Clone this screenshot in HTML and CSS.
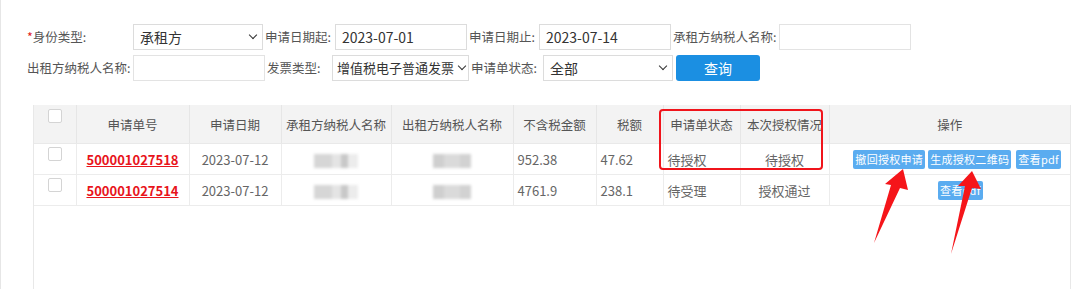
FILE: index.html
```html
<!DOCTYPE html>
<html lang="zh-CN">
	<head>
		<meta charset="UTF-8" />
		<title>授权申请查询</title>
		<link rel="stylesheet" href="styles.css">
	</head>
	<body>
		<div class="page">
			<form class="search">
				<div class="search-row">
					<label class="lbl w-first"><span class="req">*</span>身份类型:</label>
					<div class="field sel w-130"><span>承租方</span><i class="caret"></i></div>
					<label class="lbl w-72">申请日期起:</label>
					<div class="field w-132">2023-07-01</div>
					<label class="lbl w-72">申请日期止:</label>
					<div class="field w-132">2023-07-14</div>
					<label class="lbl w-107">承租方纳税人名称:</label>
					<div class="field w-132 light"></div>
				</div>
				<div class="search-row">
					<label class="lbl w-first">出租方纳税人名称:</label>
					<div class="field w-132 light"></div>
					<label class="lbl w-67">发票类型:</label>
					<div class="field sel w-137 small"><span>增值税电子普通发票</span><i class="caret"></i></div>
					<label class="lbl w-73">申请单状态:</label>
					<div class="field sel w-130"><span>全部</span><i class="caret"></i></div>
					<button type="button" class="btn-search">查询</button>
				</div>
			</form>

			<div class="grid-box">
				<table class="list">
					<colgroup>
						<col style="width: 42px">
						<col style="width: 113px">
						<col style="width: 92px">
						<col style="width: 110px">
						<col style="width: 122px">
						<col style="width: 83px">
						<col style="width: 67px">
						<col style="width: 77px">
						<col style="width: 89px">
						<col>
					</colgroup>
					<thead>
						<tr>
							<th class="c-chk"><span class="chk"></span></th>
							<th>申请单号</th>
							<th>申请日期</th>
							<th>承租方纳税人名称</th>
							<th>出租方纳税人名称</th>
							<th>不含税金额</th>
							<th>税额</th>
							<th>申请单状态</th>
							<th>本次授权情况</th>
							<th>操作</th>
						</tr>
					</thead>
					<tbody>
						<tr>
							<td class="c-chk"><span class="chk"></span></td>
							<td class="center"><a class="order-no" href="#">500001027518</a></td>
							<td class="center">2023-07-12</td>
							<td class="center"><span class="mask m-a"></span></td>
							<td class="center"><span class="mask m-b"></span></td>
							<td>952.38</td>
							<td>47.62</td>
							<td>待授权</td>
							<td class="center">待授权</td>
							<td class="ops">
								<span class="op">撤回授权申请</span><span class="op">生成授权二维码</span><span class="op gap">查看pdf</span>
							</td>
						</tr>
						<tr>
							<td class="c-chk"><span class="chk"></span></td>
							<td class="center"><a class="order-no" href="#">500001027514</a></td>
							<td class="center">2023-07-12</td>
							<td class="center"><span class="mask m-a"></span></td>
							<td class="center"><span class="mask m-b"></span></td>
							<td>4761.9</td>
							<td>238.1</td>
							<td>待受理</td>
							<td class="center">授权通过</td>
							<td class="ops single"><span class="op">查看pdf</span></td>
						</tr>
					</tbody>
				</table>
			</div>

			<!-- annotation overlay -->
			<div class="mark-box"></div>
			<svg class="arrows" width="1080" height="289" viewBox="0 0 1080 289">
				<polygon points="903,169 908,190 900,188 874,243 891,185 885,184" fill="#f5151a" />
				<polygon points="972,171 981,189 972,188 951,254 965,186 958,186" fill="#f5151a" />
			</svg>
		</div>
	</body>
</html>
```

FILE: styles.css
```css
body {
	margin: 0;
	background: #fff;
	font-family: "Noto Sans CJK SC", "Noto Sans", sans-serif;
	font-size: 13px;
	color: #333;
}

.page {
	position: relative;
	height: 289px;
	border-left: 1px solid #e6e6e6;
	overflow: hidden;
	padding-top: 23px;
	box-sizing: border-box;
}

.search {
	padding-left: 24px;
}

.search-row {
	display: flex;
	align-items: center;
	height: 27px;
	margin-bottom: 4px;
}

.lbl {
	color: #555;
	font-size: 12.5px;
	white-space: nowrap;
	box-sizing: border-box;
	padding-left: 2px;
}

.req {
	color: #e02020;
}

.w-first { width: 108px; }
.w-72 { width: 72px; }
.w-73 { width: 74px; }
.w-67 { width: 67px; }
.w-107 { width: 108px; }
.w-130 { width: 130px; }
.w-132 { width: 132px; }
.w-137 { width: 137px; }

.field {
	height: 26px;
	border: 1px solid #dcdcdc;
	box-sizing: border-box;
	display: flex;
	align-items: center;
	padding-left: 6px;
	font-size: 14px;
	color: #333;
	background: #fff;
}

.field.light {
	border-color: #e3e3e3;
}

.sel {
	justify-content: space-between;
	padding-right: 4px;
}

.sel span {
	overflow: hidden;
	white-space: nowrap;
}

.sel.small {
	font-size: 13px;
	padding-left: 4px;
	padding-right: 1px;
}

.caret {
	flex: none;
	width: 5px;
	height: 5px;
	border-right: 1.6px solid #333;
	border-bottom: 1.6px solid #333;
	transform: rotate(45deg);
	margin: 0 2px 4px 3px;
}

.btn-search {
	margin-left: 3px;
	width: 84px;
	height: 26px;
	border: none;
	border-radius: 3px;
	background: #1b8fe2;
	color: #fff;
	font-family: inherit;
	font-size: 14px;
}

.grid-box {
	margin: 24px 9px 0 32px;
	height: 200px;
	border-left: 1px solid #e8e8e8;
	border-right: 1px solid #e8e8e8;
}

.list {
	width: 100%;
	border-collapse: collapse;
	table-layout: fixed;
}

.list th {
	height: 34px;
	background: #f3f3f3;
	color: #555;
	font-weight: normal;
	font-size: 12.5px;
	border-right: 1px solid #e6e6e6;
	border-bottom: 1px solid #e9e9e9;
	padding: 0;
	white-space: nowrap;
	overflow: hidden;
}

.list td {
	height: 27px;
	color: #666;
	font-size: 13px;
	border-right: 1px solid #ececec;
	border-bottom: 1px solid #ececec;
	padding: 0 0 0 4px;
	white-space: nowrap;
}

.list th:last-child,
.list td:last-child {
	border-right: none;
}

.list td.center {
	text-align: center;
	padding-left: 0;
}

.list th.c-chk {
	vertical-align: top;
	text-align: left;
	padding: 4px 0 0 14px;
}

.list td.c-chk {
	vertical-align: top;
	padding: 3px 0 0 14px;
}

.chk {
	display: block;
	width: 12px;
	height: 12px;
	border: 1px solid #d4d4d4;
	border-radius: 2px;
	background: #fff;
}

.order-no {
	color: #e8141b;
	font-weight: bold;
	text-decoration: underline;
	font-size: 13px;
}

.mask {
	display: inline-block;
	height: 14px;
	vertical-align: middle;
	filter: blur(1.5px);
}

.m-a {
	width: 44px;
	background: linear-gradient(90deg, #d6d6d6 0 40%, #e4e4e4 40% 62%, #c8c8c8 62% 78%, #ececec 78%);
}

.m-b {
	width: 38px;
	background: linear-gradient(90deg, #cfcfcf 0 30%, #dadada 30% 70%, #d2d2d2 70%);
}

.list td.ops {
	text-align: right;
	padding: 0 9px 0 0;
	font-size: 0;
}

.list td.ops.single {
	text-align: center;
	padding: 0 0 0 18px;
}

.op {
	display: inline-block;
	vertical-align: middle;
	height: 19px;
	line-height: 19px;
	padding: 0 2px;
	margin-left: 3px;
	border-radius: 2px;
	background: #5aacf0;
	color: #fff;
	font-size: 11px;
	letter-spacing: 0.3px;
}

.op.gap {
	margin-left: 5px;
}

.mark-box {
	position: absolute;
	left: 658px;
	top: 109px;
	width: 160px;
	height: 57px;
	border: 2.5px solid #f0141b;
	border-radius: 4px;
}

.arrows {
	position: absolute;
	left: -1px;
	top: 0;
	pointer-events: none;
}
```
